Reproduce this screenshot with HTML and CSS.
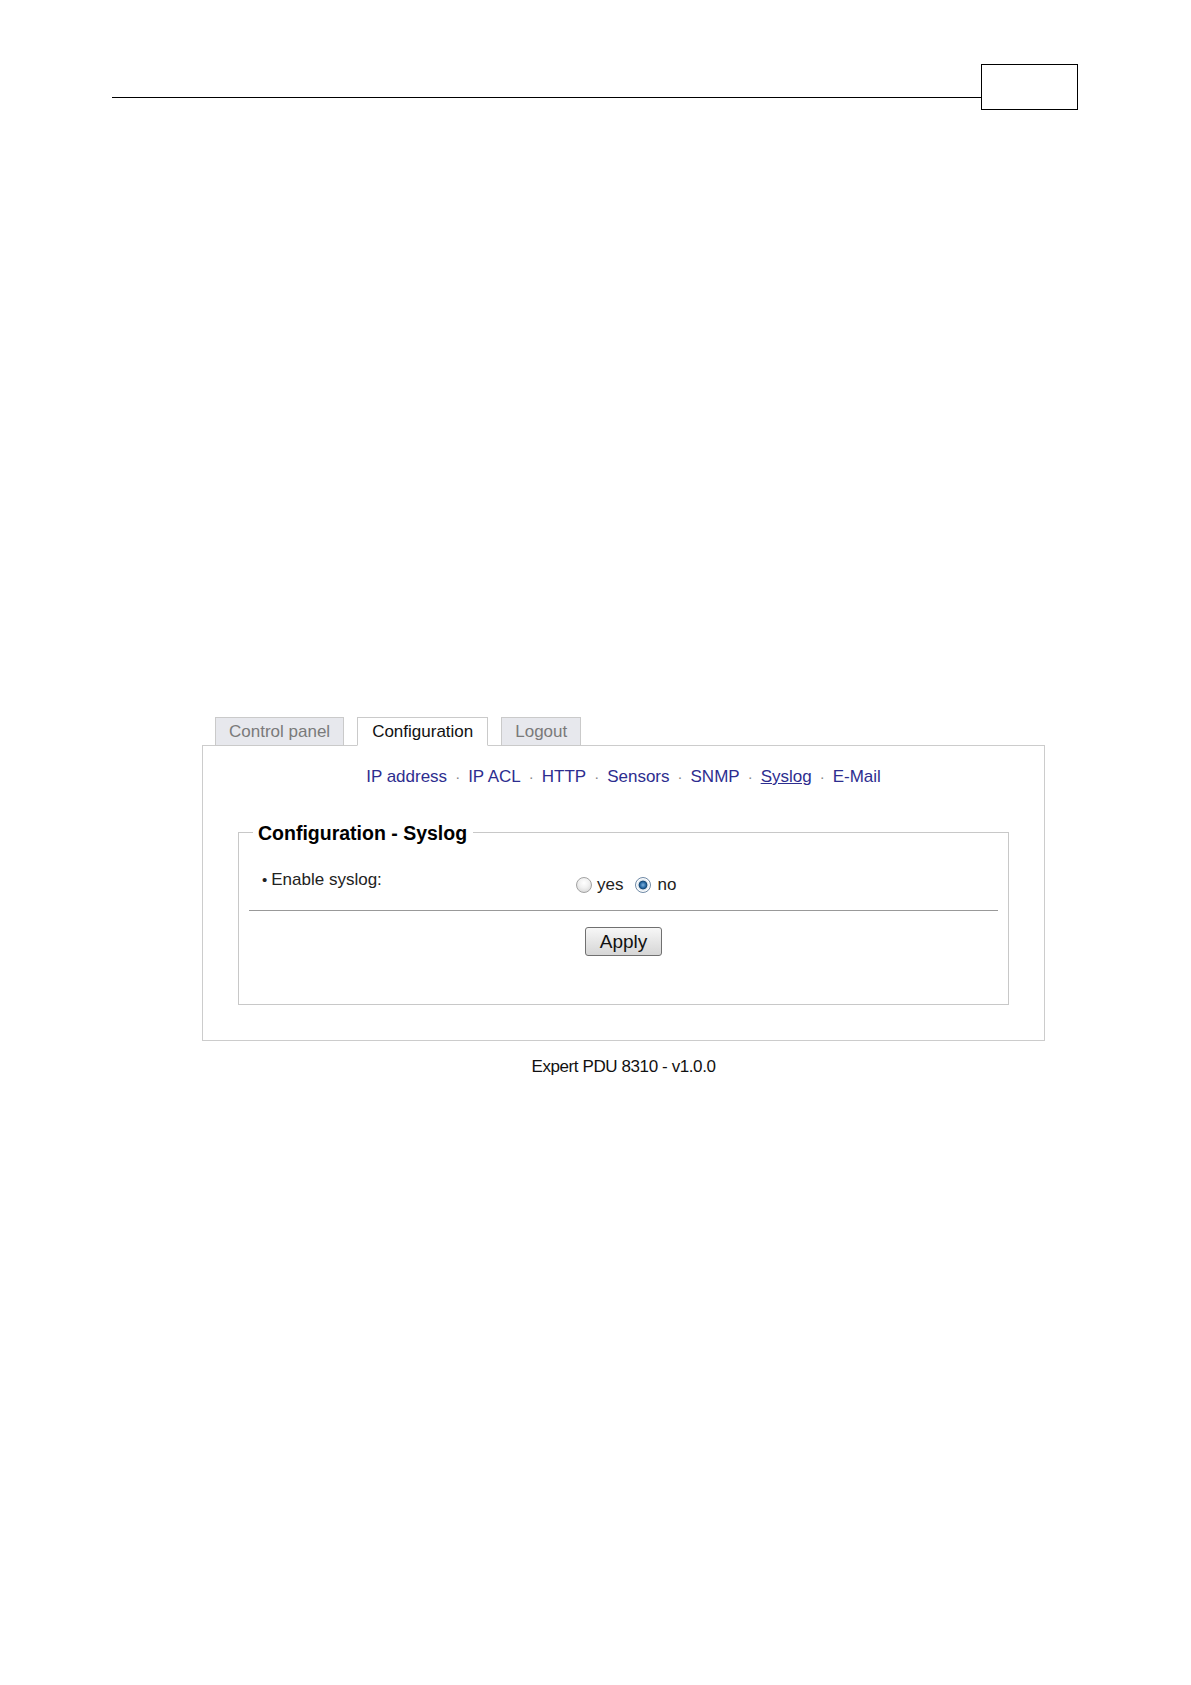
FILE: index.html
```
<!DOCTYPE html>
<html>
<head>
<meta charset="utf-8">
<title>Configuration - Syslog</title>
<link rel="stylesheet" href="styles.css">
</head>
<body>
<div class="header">
  <div class="header-line"></div>
  <div class="page-box"></div>
</div>

<div class="shot">
  <div class="tabs">
    <div class="tab">Control panel</div>
    <div class="tab active">Configuration</div>
    <div class="tab">Logout</div>
  </div>
  <div class="panel">
    <div class="nav">
      <a class="link" href="#">IP address</a><span class="sep">·</span><a class="link" href="#">IP ACL</a><span class="sep">·</span><a class="link" href="#">HTTP</a><span class="sep">·</span><a class="link" href="#">Sensors</a><span class="sep">·</span><a class="link" href="#">SNMP</a><span class="sep">·</span><a class="link current" href="#">Syslog</a><span class="sep">·</span><a class="link" href="#">E-Mail</a>
    </div>
    <fieldset class="box">
      <legend class="box-title">Configuration - Syslog</legend>
      <div class="row">
        <div class="row-label"><span class="bullet">•</span>Enable syslog:</div>
        <div class="row-value">
          <span class="radio"></span><span class="opt">yes</span>
          <span class="radio checked"></span><span class="opt">no</span>
        </div>
      </div>
      <div class="rule"></div>
      <div class="actions"><span class="button">Apply</span></div>
    </fieldset>
  </div>
  <div class="footer">Expert PDU 8310 - v1.0.0</div>
</div>
</body>
</html>
```
FILE: styles.css
```
html, body {
  margin: 0;
  padding: 0;
  background: #ffffff;
}
body {
  font-family: "Liberation Sans", Arial, sans-serif;
  color: #1a1a1a;
}
.header {
  display: flex;
  align-items: flex-start;
  margin: 64px 0 0 112px;
  width: 966px;
}
.header-line {
  flex: 1;
  height: 33px;
  border-bottom: 1px solid #000;
}
.page-box {
  width: 95px;
  height: 44px;
  border: 1px solid #000;
}
.shot {
  margin: 607px 0 0 202px;
  width: 843px;
}
.tabs {
  display: flex;
  gap: 13px;
  padding-left: 13px;
  margin-bottom: -1px;
  position: relative;
}
.tab {
  height: 27px;
  line-height: 28px;
  padding: 0 13px;
  border: 1px solid #cacaca;
  background: #e7e8ed;
  color: #7a7a7a;
  font-size: 17px;
}
.tab.active {
  padding: 0 14px;
  background: #ffffff;
  border-bottom-color: #ffffff;
  color: #111111;
}
.panel {
  border: 1px solid #cccccc;
  padding: 21px 35px 35px;
}
.nav {
  text-align: center;
  font-size: 17px;
  line-height: 20px;
}
.link {
  color: #2d2d8f;
  text-decoration: none;
}
.link.current {
  text-decoration: underline;
}
.sep {
  color: #888888;
  margin: 0 8px;
  font-size: 15px;
}
.box {
  margin: 33px 0 0;
  padding: 0 10px 48px;
  border: 1px solid #c8c8c8;
  min-width: 0;
}
.box-title {
  margin-left: 4px;
  padding: 2px 6px 0 5px;
  font-weight: bold;
  font-size: 19.5px;
  line-height: 22px;
  color: #000;
}
.row {
  display: flex;
  align-items: flex-start;
  padding-top: 24px;
}
.row-label {
  width: 314px;
  padding-left: 13px;
  font-size: 17px;
  line-height: 24px;
  color: #222;
}
.bullet {
  margin-right: 4px;
  font-size: 15px;
}
.row-value {
  display: flex;
  align-items: center;
  margin-top: 5px;
  height: 24px;
  font-size: 17px;
  color: #222;
}
.radio {
  display: inline-block;
  width: 14px;
  height: 14px;
  border-radius: 50%;
  border: 1px solid #a3a3a3;
  background: radial-gradient(circle at 50% 35%, #ffffff 0%, #f0f0f0 45%, #cfcfcf 100%);
}
.radio.checked {
  border-color: #6f8aa6;
  background: radial-gradient(circle at 50% 50%, #7fb3e0 0%, #1d5f9a 32%, #17466f 40%, #d9e3ec 48%, #ffffff 65%, #c9d2da 100%);
}
.opt {
  margin: 0 12px 0 5px;
}
.opt:last-child {
  margin-right: 0;
  margin-left: 6px;
}
.rule {
  margin-top: 13px;
  border-top: 1px solid #999999;
}
.actions {
  display: flex;
  justify-content: center;
  margin-top: 16px;
}
.button {
  display: inline-block;
  width: 75px;
  height: 27px;
  line-height: 28px;
  text-align: center;
  border: 1px solid #707070;
  border-radius: 3px;
  background: linear-gradient(#f7f7f7, #e6e6e6 50%, #d6d6d6);
  font-size: 19px;
  color: #111;
}
.footer {
  margin-top: 16px;
  text-align: center;
  font-size: 17px;
  line-height: 20px;
  letter-spacing: -0.4px;
  color: #111;
}
```
